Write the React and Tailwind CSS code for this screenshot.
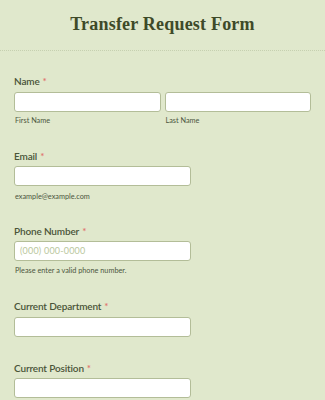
export default function App() {
  const label = "block text-[10px] leading-[12px] font-semibold text-[#4a5438] tracking-[-0.15px]";
  const star = <span className="text-[#e0736d] ml-[3px]">*</span>;
  const input = "block h-[20px] bg-white border border-[#b3bd98] rounded-[3px]";
  const sub = "text-[7.3px] leading-[9px] text-[#4c5640]";
  return (
    <div className="w-[325px] h-[400px] overflow-hidden bg-[#e0e8cc]" style={{ fontFamily: 'Lato, "Liberation Sans", sans-serif' }}>
      <div className="h-[51px] flex items-center justify-center border-b border-dotted border-[#c6d0b0]">
        <h1 className="text-[18px] font-bold text-[#3e4a28] tracking-[0.2px] mt-[-2px]" style={{ fontFamily: '"Liberation Serif", serif' }}>Transfer Request Form</h1>
      </div>
      <div className="px-[14px]">
        <div className="pt-[24px]">
          <label className={label}>Name{star}</label>
          <div className="flex gap-[4px] mt-[5px]">
            <div className="w-[147px]">
              <div className={input}></div>
              <div className={sub + " mt-[4px] ml-[1px]"}>First Name</div>
            </div>
            <div className="w-[147px]">
              <div className={input}></div>
              <div className={sub + " mt-[4px] ml-[1px]"}>Last Name</div>
            </div>
          </div>
        </div>
        <div className="pt-[25px]">
          <label className={label}>Email{star}</label>
          <div className={input + " w-[177px] mt-[4px]"}></div>
          <div className={sub + " mt-[6px] ml-[1px]"}>example@example.com</div>
        </div>
        <div className="pt-[24px]">
          <label className={label}>Phone Number{star}</label>
          <div className={input + " w-[177px] mt-[4px] flex items-center px-[5px] text-[9px] text-[#b9c79d] tracking-[0.2px]"}>(000) 000-0000</div>
          <div className={sub + " mt-[5px] ml-[1px]"}>Please enter a valid phone number.</div>
        </div>
        <div className="pt-[25px]">
          <label className={label}>Current Department{star}</label>
          <div className={input + " w-[177px] mt-[5px]"}></div>
        </div>
        <div className="pt-[25px]">
          <label className={label}>Current Position{star}</label>
          <div className={input + " w-[177px] mt-[4px]"}></div>
        </div>
      </div>
    </div>
  );
}
